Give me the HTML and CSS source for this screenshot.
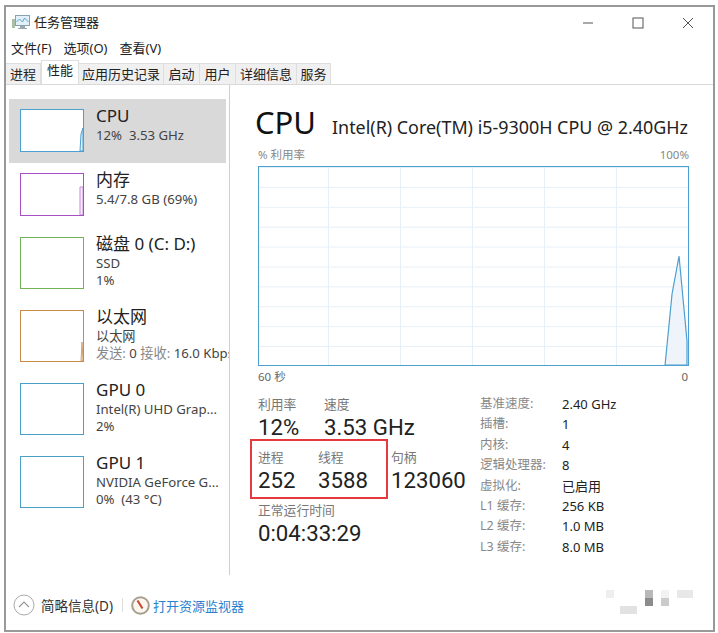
FILE: index.html
```html
<!DOCTYPE html>
<html lang="zh-CN">
<head>
    <meta charset="UTF-8">
    <meta name="viewport" content="width=device-width, initial-scale=1.0">
    <title>任务管理器</title>
    <link rel="stylesheet" href="styles.css">
</head>
<body>
<div class="window">
    <div class="titlebar">
        <svg class="app-icon" width="18" height="16" viewBox="0 0 18 16">
            <rect x="3.5" y="1.5" width="14" height="10" fill="#e4f0f7" stroke="#8aa2b0"/>
            <path d="M4.5 8l3-3 3 3 2-4 4 4" fill="none" stroke="#5aa5d0"/>
            <rect x="0" y="5" width="3" height="9" fill="#a9bfa6"/>
            <path d="M8 12h5v2h2v1H6v-1h2z" fill="#9aa8b2"/>
        </svg>
        <span class="app-title">任务管理器</span>
        <div class="controls">
            <div class="ctl"><svg width="12" height="12" viewBox="0 0 12 12"><path d="M1 6h10" stroke="#555"/></svg></div>
            <div class="ctl"><svg width="12" height="12" viewBox="0 0 12 12"><rect x="1" y="1" width="10" height="10" fill="none" stroke="#555"/></svg></div>
            <div class="ctl"><svg width="12" height="12" viewBox="0 0 12 12"><path d="M1 1l10 10M11 1L1 11" stroke="#555"/></svg></div>
        </div>
    </div>
    <div class="menubar">
        <span>文件(F)</span><span>选项(O)</span><span>查看(V)</span>
    </div>
    <div class="tabs">
        <div class="tab t1">进程</div>
        <div class="tab t2 active">性能</div>
        <div class="tab t3">应用历史记录</div>
        <div class="tab t4">启动</div>
        <div class="tab t4">用户</div>
        <div class="tab t5">详细信息</div>
        <div class="tab t6">服务</div>
    </div>
    <div class="content">
        <div class="sidebar">
            <div class="item selected">
                <div class="thumb cpu">
                    <svg viewBox="0 0 62 41"><path d="M62 41V18l-2 6-1 17z" fill="#e3f0f7" stroke="#4c9fcf"/></svg>
                </div>
                <div class="item-text">
                    <p class="name">CPU</p>
                    <p class="sub">12%&nbsp; 3.53 GHz</p>
                </div>
            </div>
            <div class="item">
                <div class="thumb mem">
                    <svg viewBox="0 0 62 41"><path d="M62 41V13h-3v28z" fill="#f7eefa" stroke="#c68bd9"/></svg>
                </div>
                <div class="item-text">
                    <p class="name">内存</p>
                    <p class="sub">5.4/7.8 GB (69%)</p>
                </div>
            </div>
            <div class="item tall">
                <div class="thumb disk"></div>
                <div class="item-text">
                    <p class="name">磁盘 0 (C: D:)</p>
                    <p class="sub">SSD</p>
                    <p class="sub">1%</p>
                </div>
            </div>
            <div class="item tall">
                <div class="thumb net">
                    <svg viewBox="0 0 62 50"><path d="M60 50l1-19 1 19z" fill="#f7e9dc" stroke="#d3a071"/></svg>
                </div>
                <div class="item-text">
                    <p class="name">以太网</p>
                    <p class="sub">以太网</p>
                    <p class="sub nowrap"><span class="muted">发送:</span> 0 <span class="muted">接收:</span> 16.0 Kbps</p>
                </div>
            </div>
            <div class="item tall">
                <div class="thumb gpu"></div>
                <div class="item-text">
                    <p class="name">GPU 0</p>
                    <p class="sub">Intel(R) UHD Grap...</p>
                    <p class="sub">2%</p>
                </div>
            </div>
            <div class="item tall">
                <div class="thumb gpu"></div>
                <div class="item-text">
                    <p class="name">GPU 1</p>
                    <p class="sub">NVIDIA GeForce G...</p>
                    <p class="sub">0%&nbsp; (43 °C)</p>
                </div>
            </div>
        </div>

        <div class="panel">
            <div class="head">
                <span class="head-title">CPU</span>
                <span class="head-model">Intel(R) Core(TM) i5-9300H CPU @ 2.40GHz</span>
            </div>
            <div class="axis top"><span>% 利用率</span><span>100%</span></div>
            <div class="graph">
                <svg viewBox="0 0 430 198" preserveAspectRatio="none">
                    <path d="M407 198L414 127L421 89L429 174V198z" fill="#eef4fa" stroke="#4c9fcf" stroke-width="1.2"/>
                </svg>
            </div>
            <div class="axis bottom"><span>60 秒</span><span class="zero">0</span></div>

            <div class="stats">
                <div class="stats-left">
                    <div class="stat-row">
                        <div class="stat w66"><p class="stat-label">利用率</p><p class="stat-value">12%</p></div>
                        <div class="stat"><p class="stat-label">速度</p><p class="stat-value">3.53 GHz</p></div>
                    </div>
                    <div class="stat-row">
                        <div class="stat w60"><p class="stat-label">进程</p><p class="stat-value">252</p></div>
                        <div class="stat w73"><p class="stat-label">线程</p><p class="stat-value">3588</p></div>
                        <div class="stat"><p class="stat-label">句柄</p><p class="stat-value">123060</p></div>
                        <div class="highlight"></div>
                    </div>
                    <div class="stat-row">
                        <div class="stat"><p class="stat-label">正常运行时间</p><p class="stat-value">0:04:33:29</p></div>
                    </div>
                </div>
                <div class="details">
                    <span class="dt">基准速度:</span><span>2.40 GHz</span>
                    <span class="dt">插槽:</span><span>1</span>
                    <span class="dt">内核:</span><span>4</span>
                    <span class="dt">逻辑处理器:</span><span>8</span>
                    <span class="dt">虚拟化:</span><span>已启用</span>
                    <span class="dt">L1 缓存:</span><span>256 KB</span>
                    <span class="dt">L2 缓存:</span><span>1.0 MB</span>
                    <span class="dt">L3 缓存:</span><span>8.0 MB</span>
                </div>
            </div>
        </div>
    </div>
    <div class="footer">
        <svg class="less-icon" width="22" height="22" viewBox="0 0 22 22">
            <circle cx="11" cy="11" r="10" fill="#fff" stroke="#aaa"/>
            <path d="M6 13l5-5 5 5" fill="none" stroke="#999" stroke-width="1.2"/>
        </svg>
        <span class="less-text">简略信息(D)</span>
        <span class="sep"></span>
        <svg class="mon-icon" width="19" height="19" viewBox="0 0 19 19">
            <circle cx="9.5" cy="9.5" r="8.3" fill="#fbf7f0" stroke="#a89f8e" stroke-width="2"/>
            <path d="M6.5 4.5l5 8" stroke="#c8452f" stroke-width="2"/>
        </svg>
        <a class="mon-link">打开资源监视器</a>
    </div>
    <svg class="mark" width="88" height="25" viewBox="0 0 88 25">
        <rect x="0" y="0" width="8" height="8" fill="#eeeeee"/>
        <rect x="39" y="0" width="8" height="8" fill="#b8b8b8"/>
        <rect x="39" y="8" width="8" height="8" fill="#8c8c8c"/>
        <rect x="55" y="0" width="8" height="8" fill="#f2f2f2"/>
        <rect x="55" y="8" width="8" height="8" fill="#cbcbcb"/>
        <rect x="71" y="0" width="16" height="8" fill="#e8e8e8"/>
        <rect x="14" y="16" width="17" height="8" fill="#e2e2e2"/>
    </svg>
</div>
</body>
</html>
```

FILE: styles.css
```css
* {
    box-sizing: border-box;
}
body {
    margin: 0;
    background-color: white;
    font-family: "Noto Sans", "Noto Sans CJK SC", sans-serif;
    color: #222;
}
p {
    margin: 0;
}
.window {
    position: relative;
    display: flex;
    flex-direction: column;
    width: 711px;
    height: 627px;
    margin: 5px 0 0 4px;
    border: 2px solid #999;
    background-color: white;
}

/* title + menu */
.titlebar {
    display: flex;
    align-items: center;
    height: 31px;
    padding: 0 0 2px 6px;
}
.app-title {
    margin-left: 4px;
    font-size: 13px;
}
.controls {
    display: flex;
    margin-left: auto;
    padding-top: 2px;
}
.ctl {
    display: flex;
    justify-content: center;
    align-items: center;
    width: 50px;
}
.menubar {
    display: flex;
    gap: 12px;
    height: 20px;
    padding-left: 5px;
    font-size: 13px;
    line-height: 20px;
}
.tabs {
    display: flex;
    align-items: flex-end;
    height: 27px;
    border-bottom: 1px solid #d9d9d9;
}
.tab {
    height: 21px;
    border: 1px solid #dedede;
    border-bottom: none;
    border-left: none;
    background-color: #f0f0f0;
    font-size: 13px;
    line-height: 20px;
    text-align: center;
}
.tab.active {
    height: 24px;
    border-left: 1px solid #dedede;
    background-color: white;
    line-height: 19px;
}
.t1 { width: 35px; }
.t2 { width: 38px; }
.t3 { width: 85px; }
.t4 { width: 36px; }
.t5 { width: 61px; }
.t6 { width: 34px; }

.content {
    display: flex;
    height: 490px;
}

/* left list */
.sidebar {
    width: 224px;
    padding: 14px 0 0 3px;
    border-right: 1px solid #cfcfcf;
    overflow: hidden;
}
.item {
    display: flex;
    width: 217px;
    height: 73px;
    padding: 10px 0 0 11px;
    gap: 12px;
}
.item.selected {
    height: 64px;
    background-color: #d9d9d9;
}
.item:nth-child(2) {
    height: 64px;
}
.thumb {
    flex: none;
    width: 64px;
    height: 52px;
    border: 1px solid;
    background-color: white;
}
.thumb svg {
    display: block;
    width: 100%;
    height: 100%;
}
.thumb.cpu, .thumb.mem {
    height: 43px;
}
.thumb.cpu { border-color: #4c9fcf; }
.thumb.mem { border-color: #a94fc4; }
.thumb.disk { border-color: #71b356; }
.thumb.net { border-color: #c98a4a; }
.thumb.gpu { border-color: #4c9fc4; }
.item-text {
    margin-top: -3px;
    white-space: nowrap;
}
.name {
    font-size: 17px;
    line-height: 19px;
    margin-bottom: 2px;
}
.sub {
    font-size: 13.2px;
    line-height: 17px;
    color: #444;
}
.muted {
    color: #888;
}

/* right panel */
.panel {
    flex: 1;
    padding-left: 28px;
    padding-right: 24px;
}
.head {
    display: flex;
    align-items: baseline;
    margin: 17px 0 0 -3px;
    height: 40px;
    line-height: 40px;
    white-space: nowrap;
}
.head-title {
    font-size: 31px;
    color: #111;
}
.head-model {
    margin-left: 16px;
    font-size: 17.9px;
}
.axis {
    display: flex;
    justify-content: space-between;
    font-size: 11.5px;
    line-height: 16px;
    color: #888;
}
.axis.top {
    margin-top: 5px;
}
.axis.bottom {
    margin-top: 3px;
    color: #666;
}
.zero {
    margin-right: 1px;
}
.graph {
    height: 200px;
    margin-top: 3px;
    border: 1px solid #4c9fcf;
    background-color: white;
    background-image:
        linear-gradient(to right, #e6f0f7 1px, transparent 1px),
        linear-gradient(to bottom, #e6f0f7 1px, transparent 1px);
    background-size: 72px 19.9px;
    background-position: right 0 top 0;
}
.graph svg {
    display: block;
    width: 100%;
    height: 100%;
}
.stats {
    display: flex;
    margin-top: 12px;
}
.stats-left {
    display: flex;
    flex-direction: column;
    gap: 9px;
    width: 222px;
}
.stat-row {
    position: relative;
    display: flex;
}
.w66 { width: 66px; }
.w60 { width: 60px; }
.w73 { width: 73px; }
.stat-label {
    font-size: 12.8px;
    line-height: 14px;
    margin-bottom: 2px;
    color: #777;
}
.stat-value {
    font-family: Roboto, "Noto Sans", sans-serif;
    font-size: 22.2px;
    line-height: 28px;
    white-space: nowrap;
}
.highlight {
    position: absolute;
    left: -8px;
    top: -11px;
    width: 138px;
    height: 60px;
    border: 2px solid #e5393f;
}
.details {
    display: grid;
    grid-template-columns: 82px auto;
    grid-auto-rows: 20.4px;
    margin-top: -1px;
    font-size: 13px;
    line-height: 16px;
}
.dt {
    font-size: 12.5px;
    color: #888;
}

/* footer */
.footer {
    display: flex;
    align-items: center;
    height: 55px;
    padding: 5px 0 0 7px;
}
.less-text {
    margin-left: 6px;
    font-size: 13.5px;
    color: #333;
}
.sep {
    width: 1px;
    height: 14px;
    margin: 0 8px 0 9px;
    background-color: #ddd;
}
.mon-link {
    margin-left: 3px;
    font-size: 13px;
    color: #2a7fd0;
}
.mark {
    position: absolute;
    left: 600px;
    bottom: 15px;
}
```
